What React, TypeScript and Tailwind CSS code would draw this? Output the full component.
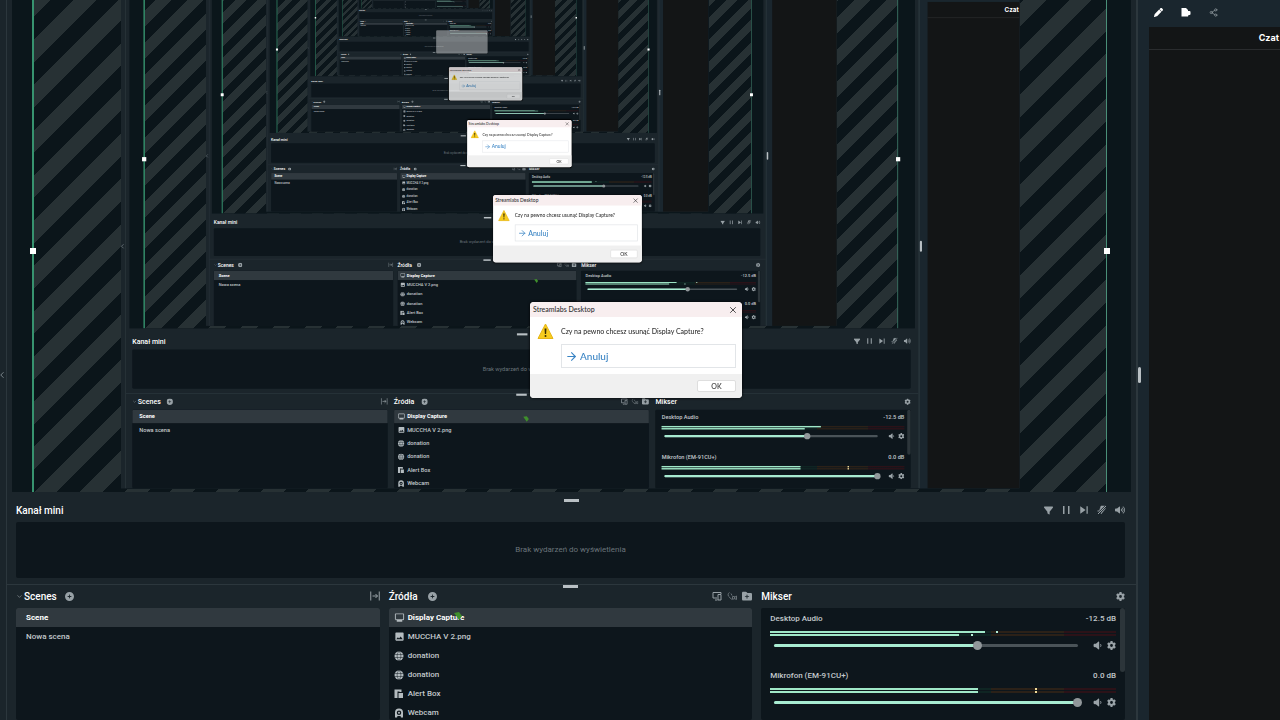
import { useId, useState } from "react";
import {
  FaCirclePlus,
  FaFilter,
  FaFolderPlus,
  FaGear,
  FaPen,
  FaVolumeHigh,
  FaVolumeLow,
} from "react-icons/fa6";
import { MdImage, MdOutlineMonitor, MdSkipNext } from "react-icons/md";
import { ArrowRight, ChevronDown, ChevronLeft, Share2, X } from "lucide-react";

type Channel = {
  name: string;
  db: string;
  volume: number;
  bars: number[];
  peaks: number[];
};

type Frame = {
  cursor?: [number, number];
  desktop: { bars: number[]; peaks: number[] };
  mic: { bars: number[]; peaks: number[] };
  dialog: string;
};

// every captured frame is a little older than the one around it
const FRAMES: Frame[] = [
  {
    cursor: [453, 611],
    desktop: { bars: [62, 54.5], peaks: [65.3, 58] },
    mic: { bars: [60, 60], peaks: [76.7, 76.7] },
    dialog: "opacity-100",
  },
  {
    cursor: [572, 616],
    desktop: { bars: [65.5, 59], peaks: [] },
    mic: { bars: [57.2, 57.2], peaks: [76.7, 76.7] },
    dialog: "opacity-100",
  },
  {
    cursor: [665, 624],
    desktop: { bars: [53.5, 49], peaks: [65, 58] },
    mic: { bars: [57, 57], peaks: [] },
    dialog: "opacity-100",
  },
  {
    desktop: { bars: [50, 50], peaks: [53] },
    mic: { bars: [0, 0], peaks: [] },
    dialog: "opacity-80",
  },
  {
    desktop: { bars: [48, 52], peaks: [] },
    mic: { bars: [0, 0], peaks: [] },
    dialog: "opacity-40",
  },
];

const LAST_LEVEL = 7;

function BoxesIcon() {
  return (
    <svg viewBox="0 0 20 20" className="size-[10px]" fill="currentColor">
      <path d="M1 1h14v5h-4V5H7v13H1z" />
      <path d="M9 8h9v10H9z" />
    </svg>
  );
}

function GlobeIcon() {
  return (
    <svg viewBox="0 0 20 20" className="size-[10px]">
      <circle cx="10" cy="10" r="9" fill="currentColor" />
      <path
        d="M1 7h18M1 13h18M10 1C5 5 5 15 10 19M10 1c5 4 5 14 0 18"
        fill="none"
        stroke="#0d161c"
        strokeWidth="1"
      />
    </svg>
  );
}

function WebcamIcon() {
  return (
    <svg viewBox="0 0 20 20" className="size-[10px]" fill="currentColor">
      <path
        fillRule="evenodd"
        d="M10 1a8 8 0 0 0-8 8v10h4l1-3h6l1 3h4V9a8 8 0 0 0-8-8zm0 4a4.500 4.500 0 1 1 0 9 4.500 4.500 0 0 1 0-9z"
      />
      <circle cx="10" cy="9.500" r="2" />
    </svg>
  );
}

function CollapseIcon() {
  return (
    <svg viewBox="0 0 20 20" className="size-[10px]" fill="none" stroke="currentColor" strokeWidth="2">
      <path d="M1.500 1v18M18.500 1v18M5 10h10M11 6l4 4-4 4" />
    </svg>
  );
}

function DualOutputIcon() {
  return (
    <svg viewBox="0 0 20 20" className="size-[10px]" fill="none" stroke="currentColor" strokeWidth="2">
      <path d="M10 14H2V3h16v3M6 18h5M12 7h6v11h-6z" />
    </svg>
  );
}

function GuestIcon() {
  return (
    <svg viewBox="0 0 20 20" className="size-[10px] opacity-60" fill="none" stroke="currentColor" strokeWidth="2">
      <path d="M5 3a5 5 0 0 0 0 9c1 3 3 4 6 5M8 5l2 4M11 11h4v5h-4zM15 13l4-3v7l-4-2" />
    </svg>
  );
}

function PauseIcon() {
  return (
    <svg viewBox="0 0 20 20" className="size-[10px]" fill="currentColor">
      <path d="M4 2h3v16H4zM14 2h3v16h-3z" />
    </svg>
  );
}

function MuteAlertIcon() {
  return (
    <svg viewBox="0 0 20 20" className="size-[10px]" fill="currentColor" stroke="currentColor">
      <path d="M8 2h9l-4 5h4L8 18l2-7H5z" />
      <path d="M2 18 18 2" strokeWidth="4" className="stroke-[#1b252b]" />
      <path d="M2 18 18 2M1 12h4" strokeWidth="2" />
    </svg>
  );
}

function PuzzleIcon() {
  return (
    <svg viewBox="0 0 20 20" className="size-[10px]" fill="currentColor">
      <path d="M1 2h9l4 4v2h3a2 2 0 0 1 2 2v4a2 2 0 0 1-2 2h-2l-1 3H1z" />
    </svg>
  );
}

function WarningIcon() {
  return (
    <svg viewBox="0 0 34 34" className="size-[17px] shrink-0">
      <path d="M17 2 32 31H2z" fill="#f7cc1e" stroke="#e6b517" strokeWidth="2" strokeLinejoin="round" />
      <path d="M15 11h4l-.8 11h-2.400z" fill="#3a2d00" />
      <circle cx="17" cy="26" r="2" fill="#3a2d00" />
    </svg>
  );
}

const SOURCES = [
  { name: "Display Capture", icon: <MdOutlineMonitor size={11} /> },
  { name: "MUCCHA V 2.png", icon: <MdImage size={11} /> },
  { name: "donation", icon: <GlobeIcon /> },
  { name: "donation", icon: <GlobeIcon /> },
  { name: "Alert Box", icon: <BoxesIcon /> },
  { name: "Webcam", icon: <WebcamIcon /> },
];

function Meter({ value, peak }: { value: number; peak?: number }) {
  return (
    <div className="relative h-[2px] bg-[linear-gradient(90deg,#0f2523_0_64%,#2b2118_64%_85%,#2b1218_85%)]">
      <div className="h-full bg-[#a0e8c8]" style={{ width: `${value}%` }} />
      {peak !== undefined && (
        <div
          className={`absolute top-0 h-full w-[2px] ${peak > 70 ? "bg-[#f0dc9a]" : "bg-[#b5eed5]"}`}
          style={{ left: `${peak}%` }}
        />
      )}
    </div>
  );
}

function MixerItem({ channel }: { channel: Channel }) {
  const id = useId();
  const [volume, setVolume] = useState(channel.volume);

  return (
    <div className="h-[57px] shrink-0 pt-1">
      <div className="flex justify-between leading-[14px]">
        <label htmlFor={id}>{channel.name}</label>
        <span>{channel.db}</span>
      </div>
      <div className="mt-[5px] space-y-px">
        <Meter value={channel.bars[0]} peak={channel.peaks[0]} />
        <Meter value={channel.bars[1]} peak={channel.peaks[1]} />
      </div>
      <div className="mt-1 flex items-center gap-[5px] text-[#9aa3a8]">
        <div className="mr-[6px] grid flex-1 items-center">
          <div className="col-start-1 row-start-1 mx-1 h-[3px] rounded-full bg-[#4a5358]">
            <div className="h-full rounded-full bg-[#a8ecd2]" style={{ width: `${volume}%` }} />
          </div>
          <input
            id={id}
            type="range"
            min={0}
            max={100}
            value={volume}
            onChange={(e) => setVolume(Number(e.target.value))}
            className="col-start-1 row-start-1 h-[10px] w-full appearance-none bg-transparent [&::-webkit-slider-thumb]:size-[9px] [&::-webkit-slider-thumb]:appearance-none [&::-webkit-slider-thumb]:rounded-full [&::-webkit-slider-thumb]:bg-[#91979a]"
          />
        </div>
        <button aria-label="Wycisz">
          <FaVolumeLow size={9} />
        </button>
        <button aria-label="Ustawienia">
          <FaGear size={9} />
        </button>
      </div>
    </div>
  );
}

function ConfirmDialog({ level }: { level: number }) {
  return (
    <div
      role="dialog"
      className={`absolute top-[302px] left-[530px] flex h-[96px] w-[212px] flex-col overflow-hidden rounded-[4px] bg-white font-[Lato,sans-serif] text-[7px] text-[#2f2f2f] shadow-[0_0_3px_#000] ${FRAMES[level].dialog}`}
    >
      {level < 4 && (
        <>
          <div className="flex h-[15px] items-center justify-between bg-[#f8eeef] pr-1 pl-[3px]">
            <h2>Streamlabs Desktop</h2>
            <button aria-label="Zamknij">
              <X size={10} strokeWidth={2} />
            </button>
          </div>
          <div className="flex flex-1 gap-[7px] pt-[6px] pr-[6px] pl-[7px]">
            <WarningIcon />
            <div className="flex-1">
              <p className="leading-[16px] whitespace-nowrap">Czy na pewno chcesz usunąć Display Capture?</p>
              <button className="mt-[5px] flex h-[24px] w-full items-center gap-[2px] border border-[#e2e5e8] pl-[3px] text-[10px] text-[#3984c4]">
                <ArrowRight size={13} />
                Anuluj
              </button>
            </div>
          </div>
          <div className="flex h-[24px] items-center justify-end bg-[#f0f0f0] pr-[6px]">
            <button className="h-[12px] w-[39px] rounded-[2px] border border-[#dedede] bg-white leading-[10px]">OK</button>
          </div>
        </>
      )}
    </div>
  );
}

function Preview({ level }: { level: number }) {
  return (
    <div className="mx-[5px] min-h-0 flex-1 overflow-hidden bg-[#0b161b] pr-[24px] pl-[20px]">
      <div className="relative h-full border-r border-l-2 border-r-[#4a8f78] border-l-[#37936f] bg-[repeating-linear-gradient(135deg,#273134_0_12px,#0b151a_12px_28px,#273134_28px_32px)]">
        {/* captured screen */}
        {level < LAST_LEVEL && (
          <div className="pointer-events-none absolute -top-[17px] left-[87px] h-[720px] w-[1280px] origin-top-left scale-[0.702]">
            <Desktop level={level + 1} />
          </div>
        )}
        {/* resize handles */}
        <div className="absolute top-[248px] -left-1 size-[6px] bg-white" />
        <div className="absolute top-[248px] -right-1 size-[6px] bg-white" />
      </div>
    </div>
  );
}

function Desktop({ level }: { level: number }) {
  const frame = FRAMES[Math.min(level, FRAMES.length - 1)];
  const channels: Channel[] = [
    { name: "Desktop Audio", db: "-12.5 dB", volume: 67, ...frame.desktop },
    { name: "Mikrofon (EM-91CU+)", db: "0.0 dB", volume: 100, ...frame.mic },
  ];

  return (
    <div className="relative flex h-full w-full overflow-hidden bg-[#1b252b] font-[Roboto,sans-serif] text-[8px] font-medium text-[#c3c9cc] select-none">
      <nav className="flex w-[7px] items-center border-x border-l-transparent border-r-[#2c373d] pt-[30px]">
        <button aria-label="Rozwiń menu" className="-ml-1 shrink-0 text-[#8d979c]">
          <ChevronLeft size={10} />
        </button>
      </nav>

      <main className="flex min-w-0 flex-1 flex-col">
        <Preview level={level} />

        {/* recent events */}
        <section className="px-[9px] pt-[7px]">
          <div className="mx-auto h-[3px] w-[15px] bg-[#b9c0c4]" />
          <div className="mb-1 flex h-4 items-center justify-between">
            <h2 className="text-[10px] font-medium text-white">Kanał mini</h2>
            <div className="mr-[2px] flex gap-2 text-[#98a1a6]">
              <button aria-label="Filtruj"><FaFilter size={9} /></button>
              <button aria-label="Pauza"><PauseIcon /></button>
              <button aria-label="Pomiń"><MdSkipNext size={10} viewBox="4 4 16 16" /></button>
              <button aria-label="Wycisz alerty"><MuteAlertIcon /></button>
              <button aria-label="Głośność"><FaVolumeHigh size={10} /></button>
            </div>
          </div>
          <div className="mr-[2px] flex h-[56px] items-center justify-center rounded-[2px] bg-[#0d161c] font-normal text-[#6a747a]">
            Brak wydarzeń do wyświetlenia
          </div>
        </section>

        <section className="mt-[6px] border-t border-[#2c373d] pr-[11px] pl-[9px]">
          <div className="mx-auto h-[3px] w-[15px] bg-[#b9c0c4]" />
          <div className="grid grid-cols-3 gap-[9px]">
            {/* scenes */}
            <div>
              <div className="mb-1 flex h-4 items-center text-[#98a1a6]">
                <ChevronDown size={7} className="mr-px" />
                <h2 className="text-[10px] font-medium text-white">Scenes</h2>
                <button aria-label="Dodaj scenę" className="ml-2"><FaCirclePlus size={9} /></button>
                <button aria-label="Zwiń" className="ml-auto"><CollapseIcon /></button>
              </div>
              <ul className="h-[112px] overflow-hidden rounded-[2px] bg-[#0d161c] leading-[19px]">
                <li className="bg-[#30393f] pl-[10px] font-bold text-white">Scene</li>
                <li className="pl-[10px]">Nowa scena</li>
              </ul>
            </div>

            {/* sources */}
            <div>
              <div className="mb-1 flex h-4 items-center text-[#98a1a6]">
                <h2 className="text-[10px] font-medium text-white">Źródła</h2>
                <button aria-label="Dodaj źródło" className="ml-[10px]"><FaCirclePlus size={9} /></button>
                <div className="ml-auto flex gap-[5px]">
                  <button aria-label="Podwójne wyjście"><DualOutputIcon /></button>
                  <button aria-label="Goście"><GuestIcon /></button>
                  <button aria-label="Dodaj folder"><FaFolderPlus size={10} /></button>
                </div>
              </div>
              <ul className="h-[112px] overflow-hidden rounded-[2px] bg-[#0d161c] leading-[19px]">
                {SOURCES.map((source, i) => (
                  <li
                    key={i}
                    className={`flex h-[19px] items-center gap-[3px] pl-[5px] ${i === 0 ? "bg-[#30393f] font-bold text-white" : ""}`}
                  >
                    <span className="flex w-[11px] justify-center text-[#b4bcc0]">{source.icon}</span>
                    {source.name}
                  </li>
                ))}
              </ul>
            </div>

            {/* mixer */}
            <div>
              <div className="mb-1 flex h-4 items-center justify-between">
                <h2 className="text-[10px] font-medium text-white">Mikser</h2>
                <button aria-label="Ustawienia miksera" className="text-[#98a1a6]"><FaGear size={9} /></button>
              </div>
              <div className="flex h-[112px] overflow-hidden rounded-[2px] bg-[#0d161c] pl-[9px]">
                <div className="flex-1">
                  {channels.map((channel) => (
                    <MixerItem key={channel.name} channel={channel} />
                  ))}
                </div>
                <div className="ml-1 h-[64px] w-[5px] rounded-full bg-[#2c353a]" />
              </div>
            </div>
          </div>
        </section>
      </main>

      <aside className="flex w-[144px] shrink-0 border-l border-[#2c373d] bg-[#1a262e]">
        <div className="flex w-[12px] shrink-0 items-center border-l border-[#2c373d] pt-[30px]">
          <div className="h-[16px] w-[3px] rounded-full bg-[#b9c0c4]" />
        </div>
        <div className="flex flex-1 flex-col">
          <div className="flex h-[27px] items-center gap-[18px] pb-[3px] pl-[5px] text-white">
            <button aria-label="Edytuj"><FaPen size={9} /></button>
            <button aria-label="Dodatki"><PuzzleIcon /></button>
            <button aria-label="Udostępnij" className="text-[#8d979c]"><Share2 size={9} /></button>
          </div>
          <div className="flex-1 bg-[#131516]">
            <h2 className="border-b border-[#2a2c2e] pr-px text-right font-[Inter,sans-serif] text-[9px] leading-[22px] font-bold text-white">
              Czat
            </h2>
          </div>
        </div>
      </aside>

      {frame.cursor && (
        <svg
          viewBox="0 0 10 10"
          className="pointer-events-none absolute size-[10px]"
          style={{ left: frame.cursor[0], top: frame.cursor[1] }}
        >
          <path d="M1 2 6 1l3 4-3 4-2-3z" fill="#3f8f2c" />
        </svg>
      )}
      {level < FRAMES.length && <ConfirmDialog level={level} />}
    </div>
  );
}

export default function App() {
  return (
    <div className="h-screen w-full">
      <Desktop level={0} />
    </div>
  );
}
